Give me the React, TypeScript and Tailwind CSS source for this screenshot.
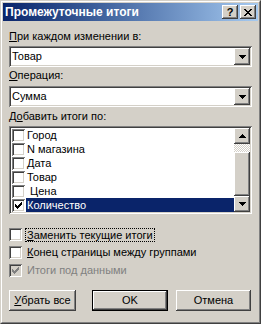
import React from "react";

const raised =
  "bg-[#d4d0c8] shadow-[inset_-1px_-1px_#404040,inset_1px_1px_#ffffff,inset_-2px_-2px_#808080,inset_2px_2px_#d4d0c8]";
const sunken =
  "shadow-[inset_1px_1px_#808080,inset_-1px_-1px_#ffffff,inset_2px_2px_#404040,inset_-2px_-2px_#d4d0c8]";

function Check({ color = "#000" }: { color?: string }) {
  // classic 7x7 pixel tick
  const starts = [2, 3, 4, 3, 2, 1, 0];
  return (
    <svg width="13" height="13" viewBox="0 0 13 13" className="absolute left-0 top-0" shapeRendering="crispEdges">
      {starts.map((s, i) => (
        <rect key={i} x={3 + i} y={3 + s} width="1" height="3" fill={color} />
      ))}
    </svg>
  );
}

function Box({ checked, disabled }: { checked?: boolean; disabled?: boolean }) {
  return (
    <span className={`relative block h-[13px] w-[13px] shrink-0 ${disabled ? "bg-[#d4d0c8]" : "bg-white"} ${sunken}`}>
      {checked && <Check color={disabled ? "#808080" : "#000"} />}
    </span>
  );
}

function Arrow({ up }: { up?: boolean }) {
  return (
    <svg width="7" height="4" viewBox="0 0 7 4" shapeRendering="crispEdges">
      <path d={up ? "M3 0h1v1h1v1h1v1h1v1H0V3h1V2h1V1h1z" : "M0 0h7v1H6v1H5v1H4v1H3V3H2V2H1V1H0z"} fill="#000" />
    </svg>
  );
}

function Combo({ value }: { value: string }) {
  return (
    <div className={`flex h-[21px] items-stretch bg-white p-[2px] ${sunken}`}>
      <div className="flex flex-1 items-center pl-px">{value}</div>
      <div className={`flex w-[16px] items-center justify-center ${raised}`}>
        <Arrow />
      </div>
    </div>
  );
}

const items = ["Город", "N магазина", "Дата", "Товар", "\u00a0Цена", "Количество"];

export default function App() {
  return (
    <div
      className="h-[324px] w-[261px] border border-b-[#404040] border-l-[#d4d0c8] border-r-[#404040] border-t-[#d4d0c8] bg-[#d4d0c8] text-[11px] leading-[13px] text-black"
      style={{ fontFamily: '"Liberation Sans", Arial, sans-serif' }}
    >
      <div className="flex h-full flex-col border border-b-[#808080] border-l-white border-r-[#808080] border-t-white p-px">
        {/* title bar */}
        <div className="flex h-[18px] items-center justify-between bg-linear-to-r from-[#0a246a] to-[#a6caf0] pl-[2px] pr-[2px]">
          <span className="text-[12px] font-bold text-white">Промежуточные итоги</span>
          <div className="flex gap-[2px]">
            <span className={`flex h-[14px] w-[16px] items-center justify-center text-[11px] font-bold leading-none ${raised}`}>?</span>
            <span className={`flex h-[14px] w-[16px] items-center justify-center ${raised}`}>
              <svg width="8" height="7" viewBox="0 0 8 7" shapeRendering="crispEdges">
                <path d="M0 0h2v1h1v1h2V1h1V0h2v1H7v1H6v1H5v1h1v1h1v1h1v1H6V6H5V5H3v1H2v1H0V6h1V5h1V4h1V3H2V2H1V1H0z" fill="#000" />
              </svg>
            </span>
          </div>
        </div>

        <div className="flex flex-col px-[6px]">
          <div className="mt-[9px] h-[13px]">
            <u>П</u>ри каждом изменении в:
          </div>
          <div className="mt-[3px]">
            <Combo value="Товар" />
          </div>
          <div className="mt-[2px] h-[13px]">
            <u>О</u>перация:
          </div>
          <div className="mt-[4px]">
            <Combo value="Сумма" />
          </div>
          <div className="mt-[3px] h-[13px]">
            Д<u>о</u>бавить итоги по:
          </div>

          {/* list */}
          <div className={`mt-[3px] flex h-[88px] bg-white p-[2px] ${sunken}`}>
            <div className="flex flex-1 flex-col">
              {items.map((it, i) => {
                const sel = i === items.length - 1;
                return (
                  <div key={it} className="flex h-[14px] items-center pl-px">
                    <Box checked={sel} />
                    <span className={`ml-px flex h-[14px] flex-1 items-center pl-px ${sel ? "bg-[#0a246a] text-white" : ""}`}>{it}</span>
                  </div>
                );
              })}
            </div>
            <div className="flex w-[16px] flex-col">
              <div className={`flex h-[16px] items-center justify-center ${raised}`}>
                <Arrow up />
              </div>
              <div className="h-[8px] bg-[image:repeating-conic-gradient(#d4d0c8_0%_25%,#ffffff_0%_50%)] bg-[length:2px_2px]" />
              <div className={`flex-1 ${raised}`} />
              <div className={`flex h-[16px] items-center justify-center ${raised}`}>
                <Arrow />
              </div>
            </div>
          </div>

          <div className="mt-[14px] flex h-[13px] items-center">
            <Box />
            <span className="ml-[3px] border border-dotted border-black px-px leading-[12px]">
              <u>З</u>аменить текущие итоги
            </span>
          </div>
          <div className="mt-[5px] flex h-[13px] items-center">
            <Box />
            <span className="ml-[5px]">
              <u>К</u>онец страницы между группами
            </span>
          </div>
          <div className="mt-[5px] flex h-[13px] items-center">
            <Box checked disabled />
            <span className="ml-[5px] text-[#808080]">Итоги под данными</span>
          </div>

          <div className="mt-[13px] flex h-[21px]">
            <div className={`flex w-[67px] items-center justify-center ${raised}`}>
              <u>У</u>брать все
            </div>
            <div className="ml-[16px] flex w-[76px] border border-black">
              <div className={`flex flex-1 items-center justify-center ${raised}`}>OK</div>
            </div>
            <div className={`ml-[8px] flex w-[75px] items-center justify-center ${raised}`}>Отмена</div>
          </div>
        </div>
      </div>
    </div>
  );
}
